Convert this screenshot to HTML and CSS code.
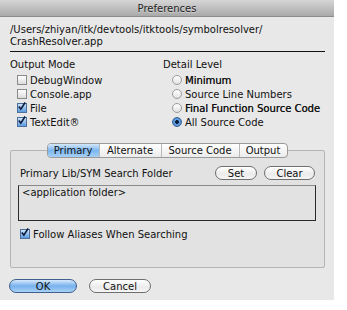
FILE: index.html
```html
<!DOCTYPE html>
<html lang="en">
<head>
    <meta charset="UTF-8">
    <title>Preferences</title>
    <link rel="stylesheet" href="styles.css">
</head>
<body>
    <div class="window">
        <div class="titlebar">Preferences</div>

        <div class="path">/Users/zhiyan/itk/devtools/itktools/symbolresolver/<br>CrashResolver.app</div>

        <div class="options">
            <div class="col col-left">
                <div class="col-title">Output Mode</div>
                <div class="row"><span class="check"></span>DebugWindow</div>
                <div class="row"><span class="check"></span>Console.app</div>
                <div class="row"><span class="check on"><svg viewBox="0 0 10 10"><path d="M2 5 L4.3 8 L9 0.5" /></svg></span>File</div>
                <div class="row"><span class="check on"><svg viewBox="0 0 10 10"><path d="M2 5 L4.3 8 L9 0.5" /></svg></span>TextEdit®</div>
            </div>
            <div class="col col-right">
                <div class="col-title">Detail Level</div>
                <div class="row"><span class="radio"></span><b>Minimum</b></div>
                <div class="row"><span class="radio"></span>Source Line Numbers</div>
                <div class="row"><span class="radio"></span><b>Final Function Source Code</b></div>
                <div class="row"><span class="radio on"></span>All Source Code</div>
            </div>
        </div>

        <div class="group">
            <div class="tabs">
                <span class="tab active">Primary</span>
                <span class="tab">Alternate</span>
                <span class="tab">Source Code</span>
                <span class="tab">Output</span>
            </div>
            <div class="folder-row">
                <span class="folder-label">Primary Lib/SYM Search Folder</span>
                <span class="pill set">Set</span>
                <span class="pill clear">Clear</span>
            </div>
            <div class="field">&lt;application folder&gt;</div>
            <div class="row follow"><span class="check on"><svg viewBox="0 0 10 10"><path d="M2 5 L4.3 8 L9 0.5" /></svg></span>Follow Aliases When Searching</div>
        </div>

        <div class="actions">
            <span class="pill ok">OK</span>
            <span class="pill cancel">Cancel</span>
        </div>
    </div>
</body>
</html>
```

FILE: styles.css
```css
body {
    margin: 0;
    background: #ffffff;
    font-family: 'DejaVu Sans', sans-serif;
    font-size: 10px;
    color: #111;
}
.window {
    width: 334px;
    height: 300px;
    background: #e8e8e8;
    box-sizing: border-box;
}
.titlebar {
    height: 17px;
    line-height: 17px;
    text-align: center;
    font-size: 10px;
    color: #222;
    text-shadow: 0 1px 0 rgba(255, 255, 255, 0.4);
    background: linear-gradient(#d6d6d6, #a9a9a9);
    border-bottom: 1px solid #8c8c8c;
    box-sizing: border-box;
}
.path {
    margin: 7px 9px 0 10px;
    line-height: 12px;
    padding-bottom: 3px;
    border-bottom: 1px solid #111;
}
.options {
    display: flex;
    margin-top: 7px;
    padding-left: 10px;
}
.col-left {
    width: 153px;
}
.col-title {
    line-height: 12px;
    margin-bottom: 2px;
}
.row {
    display: flex;
    align-items: center;
    height: 14px;
    padding-left: 7px;
    gap: 3px;
}
.col-right .row {
    padding-left: 9px;
}
.check {
    width: 8px;
    height: 8px;
    border: 1px solid #8a8a8a;
    background: linear-gradient(#ffffff, #dcdcdc);
    display: flex;
}
.check.on {
    background: linear-gradient(#cfe3fa, #5b9be0);
    border-color: #4c6f9c;
}
.check svg {
    width: 11px;
    height: 11px;
    margin: -3px 0 0 -1px;
}
.check path {
    fill: none;
    stroke: #0c1d3c;
    stroke-width: 1.8;
}
.radio {
    width: 8px;
    height: 8px;
    border: 1px solid #9a9a9a;
    border-radius: 50%;
    background: linear-gradient(#ffffff, #e2e2e2);
}
.radio.on {
    background: radial-gradient(circle, #0c1d3c 0 1.8px, #6aa7e8 2.2px, #2f6fc2 100%);
    border-color: #3a5f90;
}
.row b {
    font-weight: normal;
    text-shadow: 0.2px 0 0 #333;
}
.group {
    margin: 21px 9px 0 10px;
    border: 1px solid #b5b5b5;
    background: #e2e2e2;
    padding: 0 8px 26px 7px;
    border-radius: 2px;
}
.tabs {
    display: flex;
    width: 241px;
    height: 15px;
    margin: -8px auto 0;
    border: 1px solid #9a9a9a;
    border-radius: 4px;
    background: linear-gradient(#ffffff, #ececec);
    box-sizing: border-box;
    overflow: hidden;
}
.tab {
    display: flex;
    align-items: center;
    justify-content: center;
    border-left: 1px solid #b8b8b8;
    line-height: 13px;
}
.tab:first-child {
    border-left: none;
    width: 51px;
}
.tab:nth-child(2) { width: 61px; }
.tab:nth-child(3) { width: 77px; }
.tab:nth-child(4) { flex: 1; }
.tab.active {
    background: linear-gradient(#d3e7fb, #7db7ef 50%, #a6cff5);
}
.folder-row {
    display: flex;
    align-items: center;
    height: 14px;
    margin-top: 8px;
    padding-left: 2px;
}
.folder-label {
    flex: 1;
}
.pill {
    display: flex;
    align-items: center;
    justify-content: center;
    height: 14px;
    border: 1px solid #6f6f6f;
    border-radius: 8px;
    background: linear-gradient(#ffffff, #ebebeb 60%, #f6f6f6);
    box-sizing: border-box;
}
.set {
    width: 42px;
    margin-right: 7px;
}
.clear {
    width: 51px;
    margin-right: 1px;
}
.field {
    margin-top: 5px;
    height: 36px;
    box-sizing: border-box;
    border: 1px solid #2a2a2a;
    border-top-color: #8a8a8a;
    padding: 1px 3px;
    line-height: 12px;
}
.row.follow {
    margin-top: 6px;
    padding-left: 2px;
}
.actions {
    display: flex;
    gap: 12px;
    margin: 11px 0 0 9px;
}
.ok {
    width: 68px;
    border-color: #3f5f8c;
    background: linear-gradient(#d6e9fb, #77b1ec 50%, #a9d2f7);
}
.cancel {
    width: 62px;
}
```
